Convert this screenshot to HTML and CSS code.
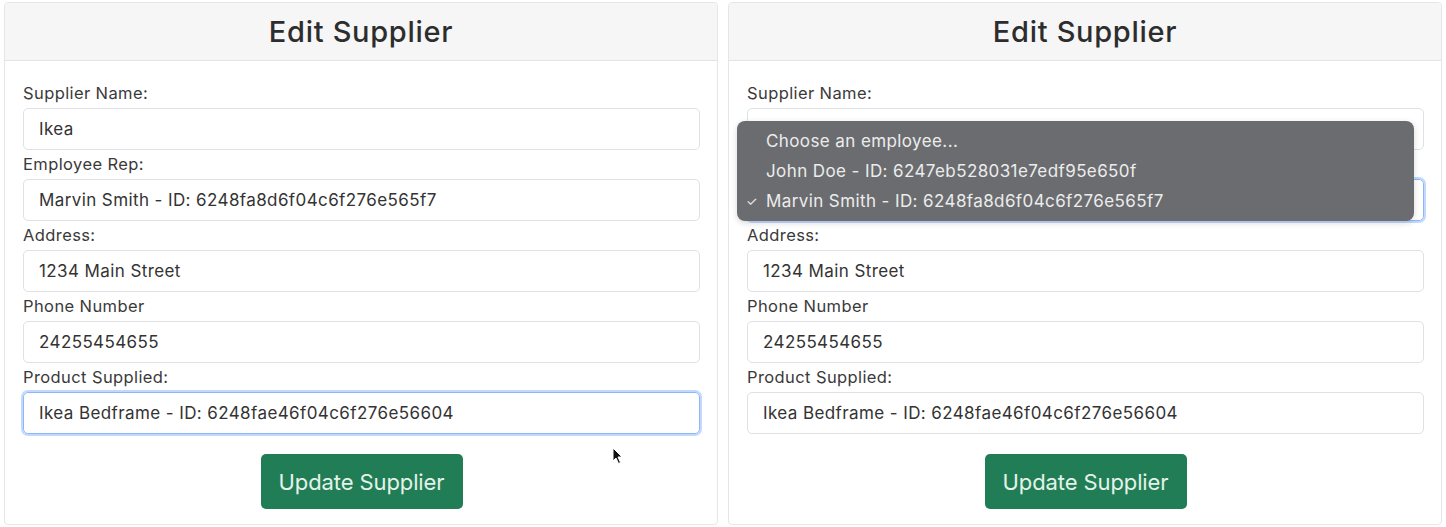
FILE: index.html
```html
<!DOCTYPE html>
<html>
<head>
<meta charset="utf-8">
<link rel="stylesheet" href="styles.css">
</head>
<body>
<div class="page">
  <div class="card">
    <div class="card-header">Edit Supplier</div>
    <form class="card-body">
      <label class="lbl">Supplier Name:</label>
      <div class="field">Ikea</div>
      <label class="lbl">Employee Rep:</label>
      <div class="field">Marvin Smith - ID: 6248fa8d6f04c6f276e565f7</div>
      <label class="lbl">Address:</label>
      <div class="field">1234 Main Street</div>
      <label class="lbl">Phone Number</label>
      <div class="field">24255454655</div>
      <label class="lbl">Product Supplied:</label>
      <div class="field focus">Ikea Bedframe - ID: 6248fae46f04c6f276e56604</div>
      <div class="actions"><button type="button" class="btn">Update Supplier</button></div>
    </form>
    <svg class="cursor" width="12" height="18" viewBox="0 0 12 18"><path d="M1 1 L1 14 L4 11 L6.5 16.5 L8.5 15.5 L6 10 L10 10 Z" fill="#111" stroke="#fff" stroke-width="1"/></svg>
  </div>
  <div class="card">
    <div class="card-header">Edit Supplier</div>
    <form class="card-body">
      <label class="lbl">Supplier Name:</label>
      <div class="field"></div>
      <label class="lbl hidden-under">Employee Rep:</label>
      <div class="field focus"></div>
      <label class="lbl">Address:</label>
      <div class="field">1234 Main Street</div>
      <label class="lbl">Phone Number</label>
      <div class="field">24255454655</div>
      <label class="lbl">Product Supplied:</label>
      <div class="field">Ikea Bedframe - ID: 6248fae46f04c6f276e56604</div>
      <div class="actions"><button type="button" class="btn">Update Supplier</button></div>
    </form>
    <ul class="menu">
      <li>Choose an employee...</li>
      <li>John Doe - ID: 6247eb528031e7edf95e650f</li>
      <li class="checked"><span class="check">✓</span>Marvin Smith - ID: 6248fa8d6f04c6f276e565f7</li>
    </ul>
  </div>
</div>
</body>
</html>
```

FILE: styles.css
```css
* { box-sizing: border-box; }
html, body { margin: 0; padding: 0; background: #fff; }
body {
  font-family: Inter, "Liberation Sans", Arial, sans-serif;
  color: #333;
  width: 1446px;
  height: 527px;
  overflow: hidden;
}
.page {
  display: grid;
  grid-template-columns: 1fr 1fr;
  gap: 10px;
  padding: 2px 4px 0 4px;
}
.card {
  position: relative;
  border: 1px solid #e6e6e6;
  border-radius: 4px;
  background: #fff;
  height: 523px;
}
.card-header {
  height: 58px;
  background: #f6f6f7;
  border-bottom: 1px solid #e4e4e4;
  font-size: 29px;
  font-weight: 500;
  letter-spacing: 0.7px;
  line-height: 57px;
  text-align: center;
  color: #2d2d2d;
  border-radius: 4px 4px 0 0;
}
.card-body {
  display: flex;
  flex-direction: column;
  padding: 20px 17px 0 18px;
  margin: 0;
}
.lbl {
  display: block;
  font-size: 16.5px;
  letter-spacing: 0.4px;
  line-height: 24px;
  margin-bottom: 3px;
  color: #3a3a3a;
}
.lbl.hidden-under { visibility: hidden; }
.field {
  height: 42px;
  border: 1px solid #dfe1e4;
  border-radius: 5px;
  padding: 0 15px;
  font-size: 17px;
  letter-spacing: 0.4px;
  line-height: 40px;
  color: #333;
  margin-bottom: 2px;
  white-space: nowrap;
  overflow: hidden;
}
.field.focus {
  border-color: #8db8f8;
  box-shadow: 0 0 0 2px rgba(120, 170, 250, 0.45);
}
.actions {
  display: flex;
  justify-content: center;
  margin-top: 18px;
}
.btn {
  width: 202px;
  height: 55px;
  background: #217d55;
  color: #e4f3ea;
  border: none;
  border-radius: 5px;
  font-family: Inter, "Liberation Sans", Arial, sans-serif;
  font-size: 22px;
  letter-spacing: -0.1px;
  padding: 0;
}
.cursor {
  position: absolute;
  left: 607px;
  top: 444px;
}
.menu {
  position: absolute;
  left: 8px;
  top: 118px;
  width: 677px;
  height: 100px;
  margin: 0;
  padding: 5px 0 0 0;
  list-style: none;
  background: #6b6c70;
  border-radius: 8px;
  box-shadow: 0 2px 6px rgba(0,0,0,0.15);
}
.menu li {
  font-size: 17px;
  letter-spacing: 0.4px;
  line-height: 30px;
  color: #ececec;
  padding-left: 29px;
  position: relative;
}
.menu .check {
  position: absolute;
  left: 9px;
  font-size: 13px;
  letter-spacing: 0;
}
```
